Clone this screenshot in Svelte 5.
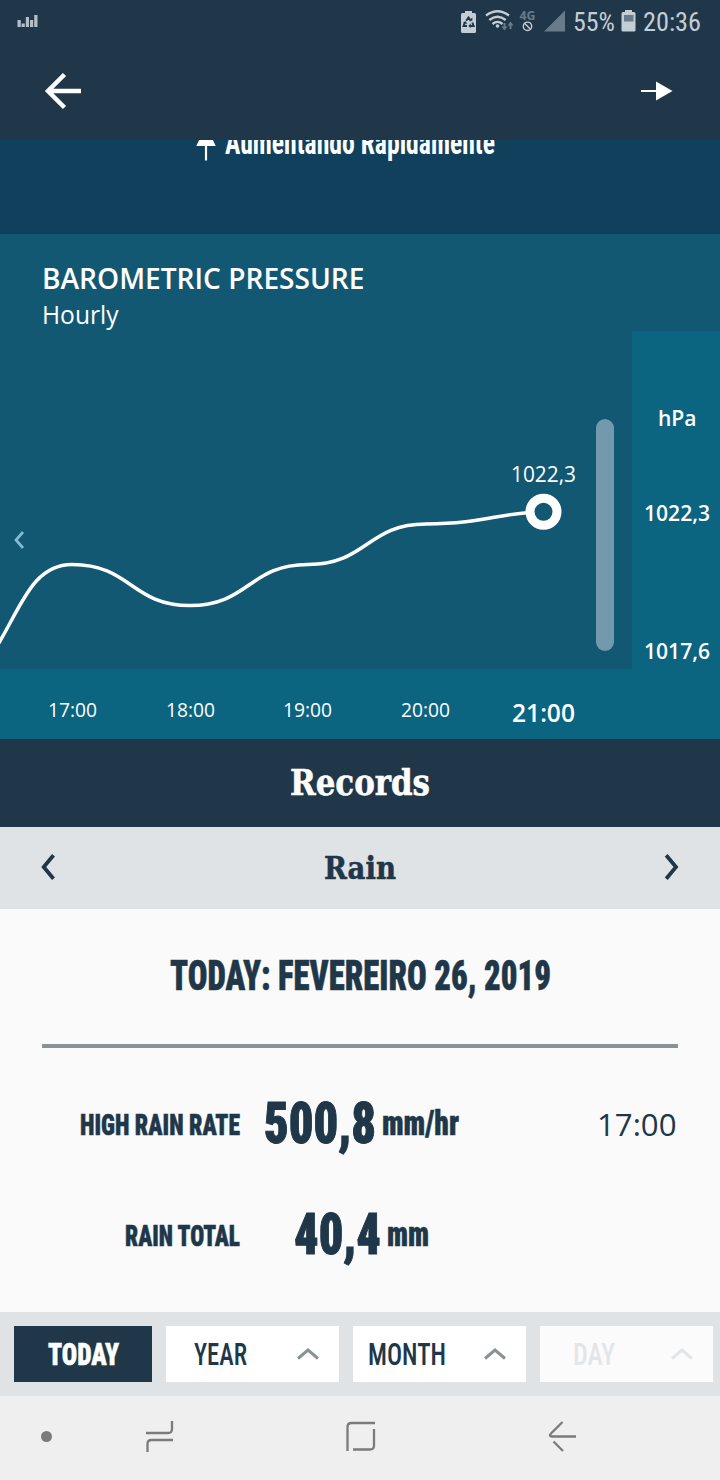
<script>
    let hours = [
        { label: '17:00' },
        { label: '18:00' },
        { label: '19:00' },
        { label: '20:00' },
        { label: '21:00', current: true }
    ];

    let records = [
        { name: 'HIGH RAIN RATE', nameWidth: 160, value: '500,8', valueWidth: 112, unit: 'mm/hr', unitWidth: 77, time: '17:00' },
        { name: 'RAIN TOTAL', nameWidth: 115, value: '40,4', valueWidth: 87, unit: 'mm', unitWidth: 42, time: '' }
    ];

    let periods = [
        { label: 'TODAY', width: 71, active: true },
        { label: 'YEAR', width: 53 },
        { label: 'MONTH', width: 78 },
        { label: 'DAY', width: 42, disabled: true }
    ];

    let selected = $state('TODAY');
</script>

<!-- text squeezed to a fixed width, the box is as high as the capitals -->
{#snippet fit(text, width, cap, kind)}
    <svg class="fit {kind}" {width} height={cap}>
        <text x="0" y={cap} font-size={cap / 0.714} textLength={width} lengthAdjust="spacingAndGlyphs">{text}</text>
    </svg>
{/snippet}

<div class="app">
    <div class="status-bar">
        <svg class="bars" width="21" height="12" viewBox="0 0 21 12">
            <path d="M.500 5h3.300v7H.500zM4.600 8.500h3.200V12H4.600zM8.800 2h3.200v10H8.800zM13 5h3.200v7H13zM17.200 0h3.300v12h-3.300z" fill="#b3bdc6" />
        </svg>
        <div class="status-right">
            <svg class="icons" width="110" height="26" viewBox="0 0 110 26">
                <path d="M5 1h7v2h2.500q1.500 0 1.500 1.500v17q0 1.500-1.500 1.500h-12Q1 23 1 21.500v-17Q1 3 2.500 3H5z" fill="#c3cdd6" />
                <g fill="none" stroke="#203749" stroke-width="1.900">
                    <path d="M6.200 10.700 8.500 7.500l2.500 3.500M12.300 12.500l1.400 3.500H10M7 16H3.500l1.400-3.700" />
                </g>
                <path d="M9 10.500h3.400V7.500zM10.800 13.500v4.500L8.300 16zM3 13l2.400-2 1.800 3z" fill="#203749" />
                <g fill="none" stroke="#c3cdd6" stroke-width="2.300">
                    <path d="M26 5.500q11.500-8.500 23 0" />
                    <path d="M29.300 10q8.200-6.500 16.400 0" />
                    <path d="M32.500 14q5-4.200 10 0" />
                </g>
                <circle cx="37.500" cy="16" r="1.800" fill="#c3cdd6" />
                <path d="M44.500 13v4M50.500 19v-5" stroke="#687b8b" stroke-width="2" />
                <path d="M41.500 16.500h6l-3 4zM47.500 15.500h6l-3-4z" fill="#687b8b" />
                <text class="net" x="59.500" y="9.500" textLength="16" lengthAdjust="spacingAndGlyphs">4G</text>
                <circle cx="67.500" cy="16.300" r="4.200" fill="none" stroke="#c3cdd6" stroke-width="1.400" />
                <path d="m64.500 13.300 6 6" stroke="#c3cdd6" stroke-width="1.400" />
                <path d="M105 .500v21H84z" fill="#687b8b" />
            </svg>
            {@render fit('55%', 42, 18, 'roboto')}
            <svg class="battery" width="15" height="22" viewBox="0 0 15 22">
                <path d="M4 0h7v2h2q1.500 0 1.500 1.500v17q0 1-1.500 1H2q-1.500 0-1.500-1v-17Q.500 2 2 2h2z" fill="#c3cdd6" />
                <path d="M3 5h9.500v6.500H3z" fill="#687b8b" />
            </svg>
            {@render fit('20:36', 58, 18, 'roboto')}
        </div>
    </div>

    <header>
        <svg width="38" height="38" viewBox="0 0 38 38">
            <path d="M20.500 2.500 4 19l16.500 16.500M3 19h34" fill="none" stroke="#fff" stroke-width="4.500" />
        </svg>
        <svg width="32" height="20" viewBox="0 0 32 20">
            <path d="M0 10h16" stroke="#fff" stroke-width="2" />
            <path d="M15 .500v19L31.500 10z" fill="#fff" />
        </svg>
    </header>

    <div class="trend">
        <div class="trend-line">
            <svg width="20" height="36" viewBox="0 0 20 36">
                <path d="M10 0 .300 21h19.400z" fill="#fff" />
                <path d="M10 20v15.500" stroke="#fff" stroke-width="2.200" />
            </svg>
            {@render fit('Aumentando Rapidamente', 270, 24, 'oswald')}
        </div>
    </div>

    <section class="pressure">
        <div class="pressure-title">
            {@render fit('BAROMETRIC PRESSURE', 322.5, 20.5, 'semi')}
            {@render fit('Hourly', 76.5, 18, 'sans')}
        </div>
        <div class="chart-row">
            <svg class="chart" width="632" height="338" viewBox="0 331 632 338">
                <path d="m23 532-7 8 7 8" fill="none" stroke="#82bbd5" stroke-width="2.700" />
                <path d="M-6 651L0 641C22 604 34 564.500 72 564.500C131 564.500 131 605.500 190 605.500S249 564.500 308 564.500S367 524 426 524S500 512 543 512" fill="none" stroke="#fff" stroke-width="3.500" />
                <circle cx="543.500" cy="511.800" r="13.500" fill="#135872" stroke="#fff" stroke-width="9" />
                <text class="point" x="511" y="482" textLength="65" lengthAdjust="spacingAndGlyphs">1022,3</text>
                <rect x="596" y="419" width="18" height="232" rx="9" fill="#7399ac" />
            </svg>
            <div class="y-axis">
                {@render fit('hPa', 38.5, 15.5, 'semi')}
                {@render fit('1022,3', 66, 15.5, 'semi')}
                {@render fit('1017,6', 66, 15.5, 'semi')}
            </div>
        </div>
        <div class="x-axis">
            {#each hours as hour}
                {#if hour.current}
                    {@render fit(hour.label, 63, 18, 'semi')}
                {:else}
                    {@render fit(hour.label, 49, 14, 'sans')}
                {/if}
            {/each}
        </div>
    </section>

    <div class="records-title">
        {@render fit('Records', 140, 25.5, 'serif')}
    </div>

    <div class="picker">
        <svg width="15" height="26" viewBox="0 0 15 26">
            <path d="M12.500 1.200 2.700 13l9.800 11.800" fill="none" stroke="#203749" stroke-width="3.800" />
        </svg>
        {@render fit('Rain', 72, 22.5, 'serif')}
        <svg width="15" height="26" viewBox="0 0 15 26">
            <path d="M2.200 1.200 12 13 2.200 24.800" fill="none" stroke="#203749" stroke-width="3.800" />
        </svg>
    </div>

    <section class="records">
        <div class="date">
            {@render fit('TODAY: FEVEREIRO 26, 2019', 381, 31, 'oswald heavy')}
        </div>
        <hr />
        {#each records as record}
            <div class="record">
                <div class="name">{@render fit(record.name, record.nameWidth, 21.5, 'oswald heavy')}</div>
                <div class="value">
                    {@render fit(record.value, record.valueWidth, 40.5, 'oswald heavy big')}
                    <span class="unit">{@render fit(record.unit, record.unitWidth, 24.5, 'oswald heavy')}</span>
                </div>
                {#if record.time}
                    <div class="time">{@render fit(record.time, 79.5, 22, 'sans')}</div>
                {/if}
            </div>
        {/each}
    </section>

    <div class="periods">
        {#each periods as period}
            <button
                class:active={selected === period.label}
                class:today={period.active}
                disabled={period.disabled}
                onclick={() => (selected = period.label)}
            >
                <span class="label">{@render fit(period.label, period.width, 23, period.active ? 'oswald heavy' : 'oswald light')}</span>
                {#if !period.active}
                    <svg class="caret" width="22" height="12" viewBox="0 0 22 12">
                        <path d="M1 10.500 11 2l10 8.500" fill="none" stroke="currentColor" stroke-width="3" />
                    </svg>
                {/if}
            </button>
        {/each}
    </div>

    <nav>
        <svg width="720" height="84" viewBox="0 0 720 84">
            <circle cx="46.500" cy="40.500" r="5.500" fill="#7b7b7b" />
            <g fill="none" stroke="#7b7b7b" stroke-width="2.300">
                <path d="M146 37h22q4 0 4-4v-8" />
                <path d="M147.500 56v-8q0-4 4-4H173" />
                <path d="M347.500 55V31q0-4 4-4H375" />
                <path d="M374 33v16.500q0 4-4 4h-17" />
                <path d="m562.500 26-11.500 11.500q-2.500 3 1 3h24" />
                <path d="m553.500 45.500 9.500 9.500" />
            </g>
        </svg>
    </nav>
</div>

<style>
    :global(body) {
        margin: 0;
    }
    .app {
        width: 720px;
        height: 1480px;
        overflow: hidden;
        background: #fafafa;
        color: #203749;
        font-family: "Open Sans", "Noto Sans", sans-serif;
    }
    svg {
        display: block;
        flex: none;
    }
    .fit {
        overflow: visible;
        fill: currentColor;
    }
    .sans {
        font-family: "Open Sans", "Noto Sans", sans-serif;
    }
    .semi {
        font-family: "Open Sans", "Noto Sans", sans-serif;
        font-weight: 600;
    }
    .roboto {
        font-family: Roboto, sans-serif;
        font-stretch: 75%;
    }
    .oswald {
        font-family: Roboto, sans-serif;
        font-stretch: 75%;
        font-weight: 700;
    }
    .light {
        font-weight: 500;
    }
    .heavy {
        font-weight: 900;
        stroke: currentColor;
        stroke-width: 0.5px;
    }
    .big {
        stroke-width: 1px;
    }
    .serif {
        font-family: "DejaVu Serif Condensed", "DejaVu Serif", serif;
        font-weight: bold;
        stroke: currentColor;
        stroke-width: 0.5px;
    }
    .status-bar {
        height: 42px;
        background: #203749;
        color: #c3cdd6;
        display: flex;
        justify-content: space-between;
        align-items: flex-start;
        padding: 0 19px 0 17px;
        box-sizing: border-box;
    }
    .bars {
        margin-top: 15px;
    }
    .status-right {
        display: flex;
        align-items: flex-start;
        padding-top: 10px;
    }
    .icons {
        margin-right: 3px;
    }
    .status-right .roboto {
        margin-top: 3px;
    }
    .battery {
        margin: 0 7px 0 6px;
    }
    .net {
        font-size: 11.5px;
        font-weight: 700;
        fill: #687b8b;
    }
    header {
        height: 98px;
        background: #203749;
        display: flex;
        justify-content: space-between;
        align-items: center;
        padding: 0 47px 0 44px;
        box-sizing: border-box;
    }
    .trend {
        height: 94px;
        background: #10405c;
        color: #fff;
        overflow: hidden;
    }
    .trend-line {
        display: flex;
        gap: 8.5px;
        margin-top: -15px;
        padding-left: 196px;
    }
    .trend-line .oswald {
        margin-top: 4.5px;
    }
    .pressure {
        height: 505px;
        background: #135872;
        color: #fff;
    }
    .pressure-title {
        height: 97px;
        box-sizing: border-box;
        padding: 34px 0 0 42px;
        display: flex;
        flex-direction: column;
        gap: 17px;
    }
    .chart-row {
        display: flex;
        height: 338px;
    }
    .point {
        font-size: 21px;
        fill: #fff;
    }
    .y-axis {
        width: 88px;
        box-sizing: border-box;
        background: #0b6480;
        display: flex;
        flex-direction: column;
        align-items: center;
        padding: 79px 0 0 2px;
    }
    .y-axis :nth-child(2) {
        margin: 79.5px 0 122.5px;
    }
    .x-axis {
        height: 70px;
        box-sizing: border-box;
        background: #0b6480;
        display: grid;
        grid-template-columns: repeat(5, 117.7px);
        justify-items: center;
        align-items: center;
        padding: 0 0 0 13.5px;
    }
    .x-axis .sans {
        margin-top: 12px;
    }
    .x-axis .semi {
        margin-top: 18.5px;
    }
    .records-title {
        height: 88px;
        box-sizing: border-box;
        padding-top: 30px;
        background: #203749;
        color: #fff;
        display: flex;
        justify-content: center;
    }
    .picker {
        height: 82px;
        box-sizing: border-box;
        background: #dfe3e6;
        display: flex;
        justify-content: space-between;
        align-items: center;
        padding: 0 41px 2px 41px;
    }
    .records {
        height: 403px;
        box-sizing: border-box;
        padding: 50px 42px 0;
    }
    .date {
        display: flex;
        justify-content: center;
    }
    hr {
        height: 4px;
        border: none;
        background: #8a9296;
        margin: 54px 0 54px;
    }
    .record {
        display: grid;
        grid-template-columns: 198px 242px 1fr;
        height: 111px;
    }
    .name {
        display: flex;
        justify-content: flex-end;
        padding-top: 10.5px;
    }
    .value {
        display: flex;
        justify-content: center;
        gap: 6px;
    }
    .unit {
        padding-top: 8px;
    }
    .time {
        display: flex;
        justify-content: flex-end;
        padding: 12px 2px 0 0;
    }
    .periods {
        height: 84px;
        box-sizing: border-box;
        background: #dfe3e6;
        display: flex;
        gap: 14px;
        padding: 14px;
    }
    button {
        flex: none;
        width: 173px;
        height: 56px;
        border: none;
        padding: 0 20px 0 0;
        background: #fff;
        color: #203749;
        display: flex;
        align-items: center;
        cursor: pointer;
    }
    .label {
        flex: 1;
        display: flex;
        justify-content: center;
        padding: 0 23px 2px 0;
    }
    .caret {
        color: #8a9296;
    }
    .today {
        width: 138px;
        padding: 0;
    }
    .today .label {
        padding-right: 0;
    }
    .active {
        background: #203749;
        color: #fff;
    }
    button:disabled,
    button:disabled .caret {
        background: #fbfbfb;
        color: #e3e6e8;
        cursor: default;
    }
    nav {
        height: 84px;
        background: #efefef;
    }
</style>
